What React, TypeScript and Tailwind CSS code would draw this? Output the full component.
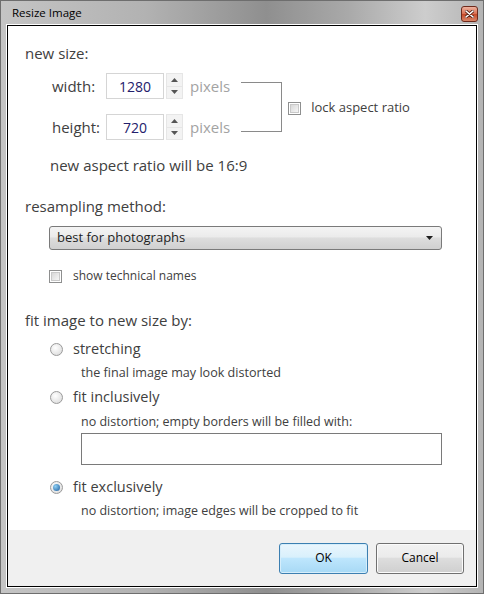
import React from 'react';

const FONT = { fontFamily: '"Open Sans", "Noto Sans", "Liberation Sans", sans-serif' };

function Spinner() {
  return (
    <div className="flex flex-col ml-[2px] h-[26px] w-[17px]">
      <div className="flex-1 flex items-center justify-center bg-[#f3f3f3] border border-[#e6e6e6]">
        <svg width="7" height="4" viewBox="0 0 7 4"><path d="M0 4 L3.5 0 L7 4 Z" fill="#555" /></svg>
      </div>
      <div className="flex-1 flex items-center justify-center bg-[#f3f3f3] border border-t-0 border-[#e6e6e6]">
        <svg width="7" height="4" viewBox="0 0 7 4"><path d="M0 0 L7 0 L3.5 4 Z" fill="#555" /></svg>
      </div>
    </div>
  );
}

function NumberRow({ label, value }: { label: string; value: string }) {
  return (
    <div className="flex items-center h-[26px]">
      <span className="w-[54px] text-[15px] text-[#404040]">{label}</span>
      <div className="w-[58px] h-[26px] border border-[#d5d5d5] bg-white flex items-center justify-center text-[14px] text-[#23206b]">
        {value}
      </div>
      <Spinner />
      <span className="ml-[7px] text-[15px] text-[#a3a3a3]">pixels</span>
    </div>
  );
}

function Checkbox() {
  return (
    <div className="w-[13px] h-[13px] border border-[#8e8f8f] bg-white p-[1px] shrink-0">
      <div className="w-full h-full bg-[linear-gradient(135deg,#d8d8d8,#f6f6f6)] border border-[#c9c9c9]" />
    </div>
  );
}

function Radio({ checked }: { checked?: boolean }) {
  return (
    <div className="w-[13px] h-[13px] rounded-full border border-[#9a9a9a] bg-[radial-gradient(circle_at_40%_35%,#ffffff,#d6d6d6)] flex items-center justify-center shrink-0">
      {checked && (
        <div className="w-[7px] h-[7px] rounded-full bg-[radial-gradient(circle_at_35%_35%,#8fd0f4,#1c5b9c)]" />
      )}
    </div>
  );
}

export default function App() {
  return (
    <div
      style={FONT}
      className="w-[484px] h-[594px] flex flex-col border border-[#6e6e6e] bg-[linear-gradient(to_right,#c4c4c4,#b2b2b2_30%,#8f8f8f_55%,#a9a9a9_72%,#cdcdcd_88%,#b4b4b4)]"
    >
      {/* title bar */}
      <div className="h-[23px] flex items-center justify-between pl-[11px] pr-[5px] shrink-0">
        <span className="text-[11.5px] text-black mt-[1px]">Resize Image</span>
        <div className="w-[17px] h-[16px] mt-[2px] rounded-[3px] border border-[#6e2a1c] bg-[linear-gradient(to_bottom,#eeb3a0,#d96d4f_50%,#c54726_51%,#d98668)] flex items-center justify-center">
          <svg width="9" height="8" viewBox="0 0 9 8">
            <path d="M1 1 L8 7 M8 1 L1 7" stroke="#5a2316" strokeWidth="3.2" strokeLinecap="round" />
            <path d="M1 1 L8 7 M8 1 L1 7" stroke="#ffffff" strokeWidth="1.6" strokeLinecap="round" />
          </svg>
        </div>
      </div>

      {/* client area */}
      <div className="flex-1 mx-[5px] mb-[5px] border border-white">
        <div className="h-full border border-black flex flex-col bg-white">
          <div className="flex-1 flex flex-col pl-[17px] pt-[17px]">
            <div className="h-[20px] flex items-center text-[15px] text-[#404040]">new size:</div>

            <div className="flex items-center mt-[10px] pl-[27px]">
              <div className="flex flex-col gap-[15px]">
                <NumberRow label="width:" value="1280" />
                <NumberRow label="height:" value="720" />
              </div>
              <div className="ml-[11px] w-[41px] h-[50px] border-t border-r border-b border-[#8a8a8a]" />
              <div className="flex items-center ml-[6px] mt-[3px]">
                <Checkbox />
                <span className="ml-[10px] text-[13px] text-[#404040]">lock aspect ratio</span>
              </div>
            </div>

            <div className="h-[20px] flex items-center mt-[15px] pl-[25px] text-[15px] text-[#404040]">
              new aspect ratio will be 16:9
            </div>

            <div className="h-[20px] flex items-center mt-[21px] text-[15px] text-[#404040]">resampling method:</div>

            <div className="mt-[10px] ml-[24px] w-[393px] h-[24px] rounded-[3px] border border-[#7a7a7a] bg-[linear-gradient(to_bottom,#f4f4f4,#ebebeb_45%,#dddddd_50%,#d0d0d0)] flex items-center justify-between pl-[7px] pr-[8px]">
              <span className="text-[13px] text-[#1e1e1e]">best for photographs</span>
              <svg width="7" height="4" viewBox="0 0 7 4"><path d="M0 0 L7 0 L3.5 4 Z" fill="#1e1e1e" /></svg>
            </div>

            <div className="h-[20px] flex items-center mt-[16px] ml-[24px]">
              <Checkbox />
              <span className="ml-[11px] text-[12px] text-[#404040]">show technical names</span>
            </div>

            <div className="h-[20px] flex items-center mt-[24px] text-[15px] text-[#404040]">fit image to new size by:</div>

            <div className="h-[20px] flex items-center mt-[9px] ml-[25px]">
              <Radio />
              <span className="ml-[10px] text-[14.5px] text-[#404040]">stretching</span>
            </div>
            <div className="h-[18px] flex items-center mt-[5px] ml-[56px] text-[12.6px] text-[#404040]">
              the final image may look distorted
            </div>

            <div className="h-[20px] flex items-center mt-[5px] ml-[25px]">
              <Radio />
              <span className="ml-[10px] text-[14.5px] text-[#404040]">fit inclusively</span>
            </div>
            <div className="h-[18px] flex items-center mt-[6px] ml-[56px] text-[12.5px] text-[#404040]">
              no distortion; empty borders will be filled with:
            </div>
            <div className="mt-[2px] ml-[56px] w-[361px] h-[32px] border border-[#7a7a7a] bg-white" />

            <div className="h-[20px] flex items-center mt-[12px] ml-[25px]">
              <Radio checked />
              <span className="ml-[10px] text-[14.5px] text-[#404040]">fit exclusively</span>
            </div>
            <div className="h-[18px] flex items-center mt-[5px] ml-[56px] text-[12.5px] text-[#404040]">
              no distortion; image edges will be cropped to fit
            </div>
          </div>

          {/* footer */}
          <div className="h-[56px] bg-[#f0f0f0] flex items-center justify-end gap-[8px] pr-[12px] shrink-0">
            <button className="w-[89px] h-[31px] rounded-[3px] border border-[#3c7fb1] bg-[linear-gradient(to_bottom,#eaf6fd,#d9f0fc_45%,#bee6fd_50%,#a7d9f5)] text-[12px] text-black shadow-[inset_0_0_0_1px_#d6eefb]">
              OK
            </button>
            <button className="w-[88px] h-[31px] rounded-[3px] border border-[#707070] bg-[linear-gradient(to_bottom,#f2f2f2,#ebebeb_45%,#dddddd_50%,#cfcfcf)] text-[12px] text-black shadow-[inset_0_0_0_1px_#fbfbfb]">
              Cancel
            </button>
          </div>
        </div>
      </div>
    </div>
  );
}
